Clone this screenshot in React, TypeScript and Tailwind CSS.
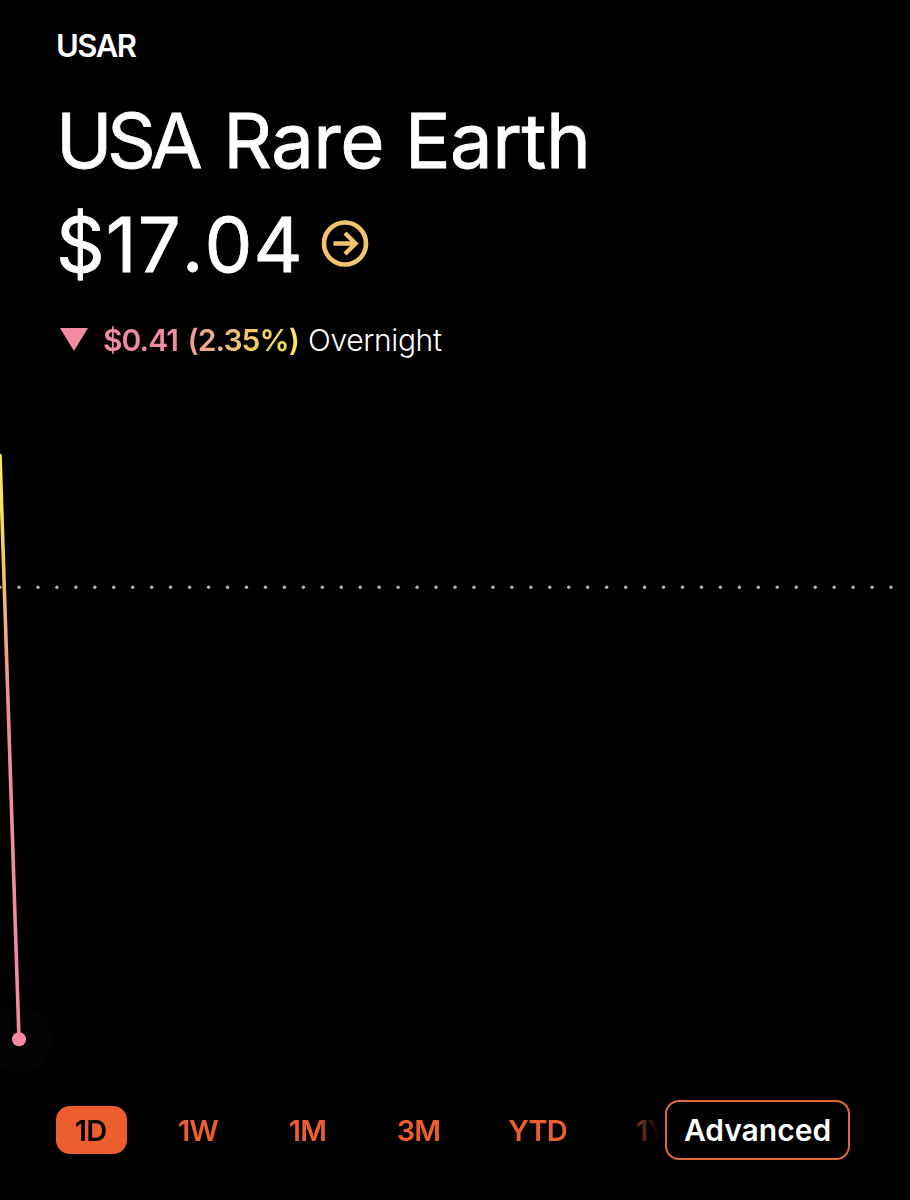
const ranges = [
  { label: "1D", width: "w-[71px]", active: true },
  { label: "1W", width: "w-[76px]" },
  { label: "1M", width: "w-[75px]" },
  { label: "3M", width: "w-[79px]" },
  { label: "YTD", width: "w-[91px]" },
  { label: "1Y", width: "w-[70px]" },
];

function PriceChart() {
  const dots = Array.from({ length: 47 }, (_, i) => 19 + i * 18.957);

  return (
    <svg className="mt-[80px] block h-[640px] w-full shrink-0" viewBox="0 0 910 640">
      <defs>
        <linearGradient id="priceLine" gradientUnits="userSpaceOnUse" x1="0" y1="15" x2="0" y2="600">
          <stop offset="0" stopColor="#fbe95c" />
          <stop offset="0.09" stopColor="#fbe158" />
          <stop offset="0.2" stopColor="#f2c36b" />
          <stop offset="0.42" stopColor="#f08c9c" />
          <stop offset="1" stopColor="#f08ba2" />
        </linearGradient>
      </defs>
      {/* previous close */}
      <circle cx="0" cy="147.3" r="1.7" fill="#a9a9a9" />
      {dots.map((x) => (
        <circle key={x} cx={x} cy="147.3" r="1.7" fill="#b4b4b4" />
      ))}
      <circle cx="19" cy="599.3" r="34" fill="#050203" />
      <path d="M0 15.5L19 599" stroke="url(#priceLine)" strokeWidth="3.6" strokeLinecap="round" fill="none" />
      <circle cx="19" cy="599.3" r="7" fill="#f08ba2" />
    </svg>
  );
}

export default function App() {
  return (
    <div className="flex h-[1200px] w-[910px] flex-col overflow-hidden bg-black pt-[26px] font-['Inter',sans-serif] text-white">
      {/* Header */}
      <header className="flex flex-col pl-[56px]">
        <div className="flex h-10 items-center text-[31px] font-semibold tracking-[-1.5px]">USAR</div>
        <h1 className="mt-[26px] h-24 whitespace-nowrap text-[76px] leading-[96px] tracking-[-0.5px] [-webkit-text-stroke:0.8px_white]">
          <span className="mr-[5px] tracking-[-5.5px]">USA</span> Rare Earth
        </h1>
        <div className="mt-4 flex h-20 items-center">
          <span className="w-[265px] whitespace-nowrap text-[76px] tracking-[1px] [font-kerning:none] [-webkit-text-stroke:0.8px_white]">
            $17.04
          </span>
          <svg className="size-[48px]" viewBox="0 0 48 48" fill="none" stroke="#f2c46d">
            <circle cx="24" cy="23.5" r="21" strokeWidth="4.6" />
            <path d="M12.5 23.5H34M24 13L34.5 23.5L24 34" strokeWidth="4.4" />
          </svg>
        </div>
        <div className="mt-9 flex h-10 items-center whitespace-nowrap text-[30px]">
          <svg className="ml-1 h-6 w-7" viewBox="0 0 28 24">
            <path d="M0 0H28L14 23Z" fill="#f08ba2" />
          </svg>
          <span className="ml-[15px] w-[205px]">
            <span className="bg-linear-to-r from-[#f08ba2] from-35% via-[#f2c36b] via-70% to-[#fbe95c] bg-clip-text font-semibold tracking-[-0.95px] [word-spacing:3px] text-transparent">
              $0.41 (2.35%)
            </span>
          </span>
          <span className="font-light tracking-[-0.35px]">Overnight</span>
        </div>
      </header>

      <PriceChart />

      {/* Range picker */}
      <nav className="mt-5 flex h-[60px] items-center pl-[56px] text-[29px] font-semibold">
        <div className="flex w-[604px] gap-[34px] overflow-hidden mask-r-from-[564px] mask-r-to-[604px]">
          {ranges.map((range) => (
            <button
              key={range.label}
              className={`flex h-12 shrink-0 items-center justify-center rounded-[14px] pt-[2px] pr-[2px] tracking-[-0.8px] ${range.width} ${
                range.active ? "bg-[#ec5e2d] text-black" : "text-[#ec5e2d]"
              }`}
            >
              {range.label}
            </button>
          ))}
        </div>
        <button className="ml-[5px] flex h-[60px] w-[185px] items-center justify-center rounded-[14px] border-2 border-[#e2683c] text-[30px]">
          Advanced
        </button>
      </nav>
    </div>
  );
}
